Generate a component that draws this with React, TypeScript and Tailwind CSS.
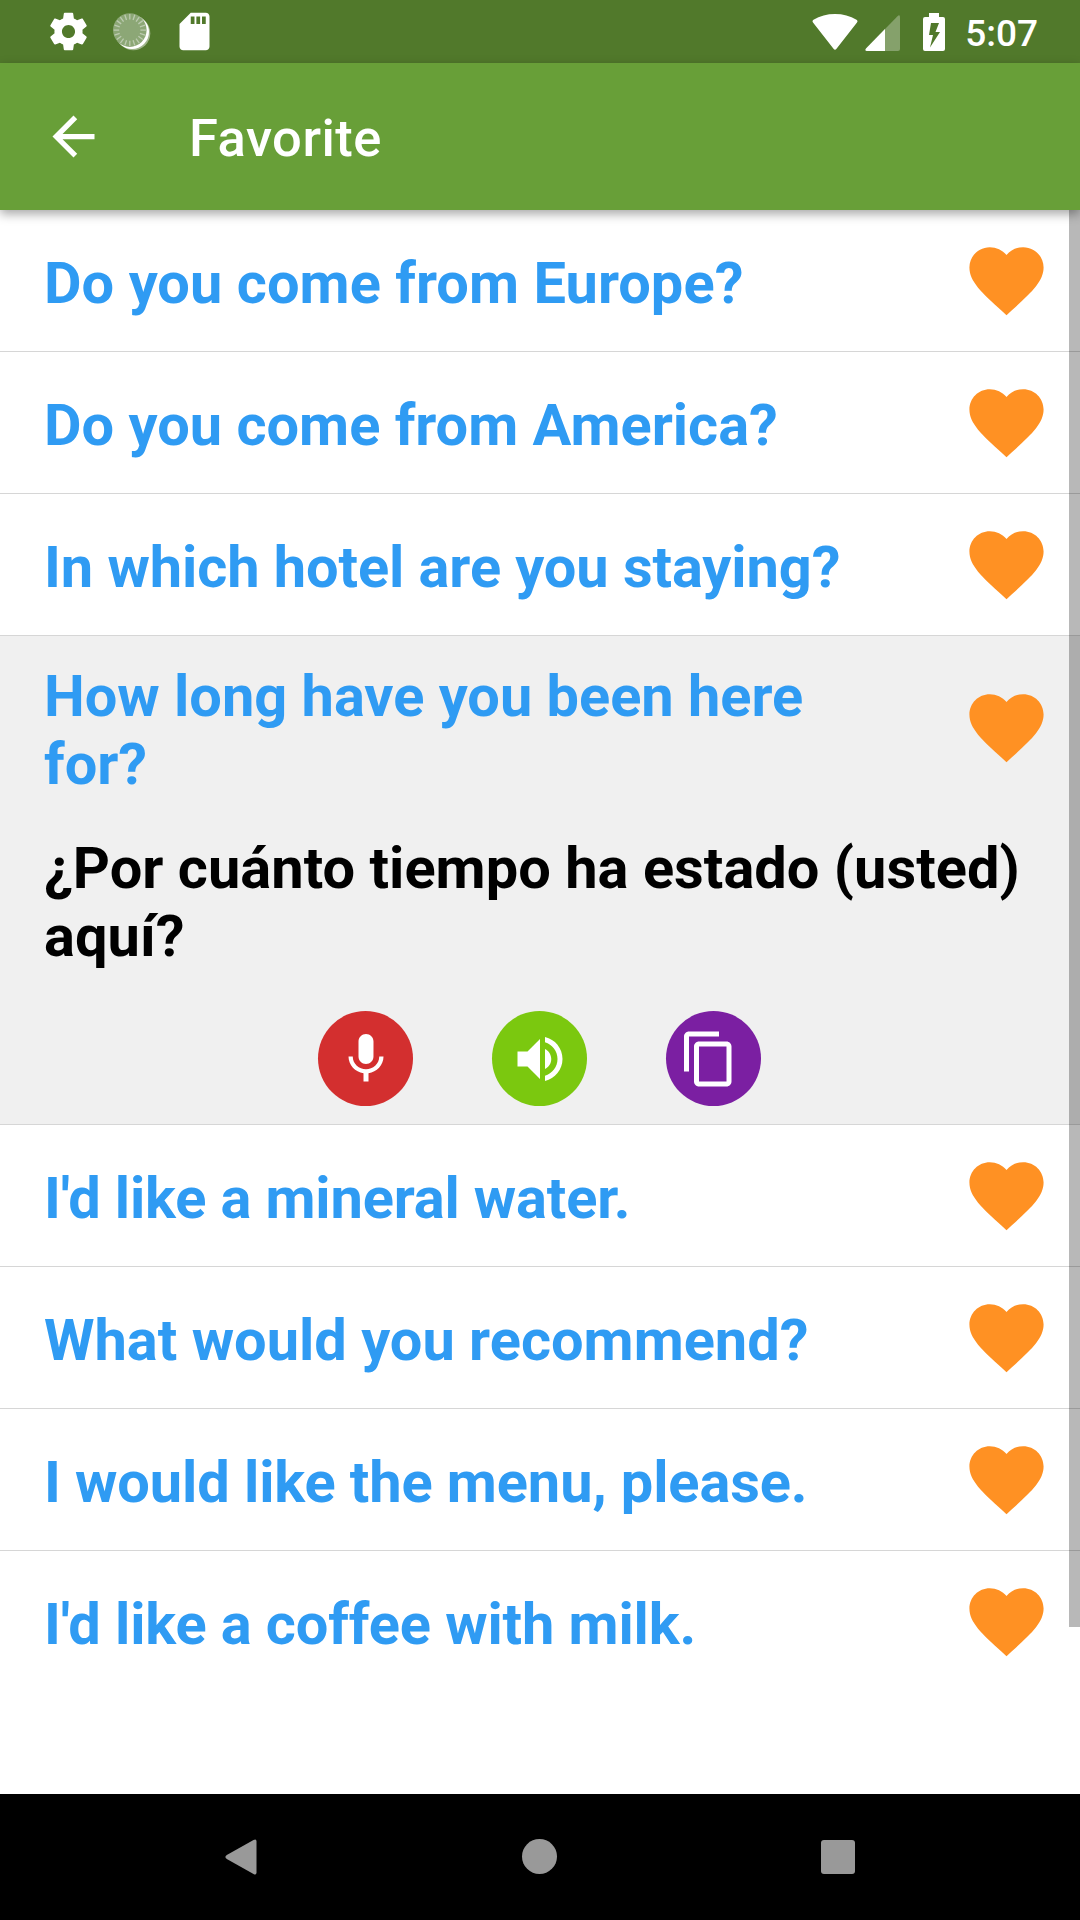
import type { ReactNode } from 'react';
import clsx from 'clsx';

interface Phrase {
  id: number;
  text: string;
  translation?: string;
  tracking?: string;
}

const PHRASES: Phrase[] = [
  { id: 1, text: 'Do you come from Europe?', tracking: 'tracking-[0.05px]' },
  { id: 2, text: 'Do you come from America?' },
  { id: 3, text: 'In which hotel are you staying?', tracking: 'tracking-[-0.08px]' },
  {
    id: 4,
    text: 'How long have you been here for?',
    translation: '¿Por cuánto tiempo ha estado (usted) aquí?',
    tracking: 'tracking-[-0.02px]',
  },
  { id: 5, text: "I'd like a mineral water.", tracking: 'tracking-[-0.15px]' },
  { id: 6, text: 'What would you recommend?' },
  { id: 7, text: 'I would like the menu, please.', tracking: 'tracking-[-0.1px]' },
  { id: 8, text: "I'd like a coffee with milk.", tracking: 'tracking-[-0.11px]' },
];

const TICKS = Array.from({ length: 20 }, (_, i) => i * 18);

function Icon({ d, className }: { d: string; className?: string }) {
  return (
    <svg viewBox="0 0 24 24" fill="currentColor" className={clsx('shrink-0', className)}>
      <path d={d} />
    </svg>
  );
}

const PATHS = {
  settings:
    'M19.43 12.98c.04-.32.07-.64.07-.98s-.03-.66-.07-.98l2.11-1.65c.19-.15.24-.42.12-.64l-2-3.46c-.12-.22-.39-.3-.61-.22l-2.49 1c-.52-.4-1.08-.73-1.69-.98l-.38-2.65C14.46 2.18 14.25 2 14 2h-4c-.25 0-.46.18-.49.42l-.38 2.65c-.61.25-1.17.59-1.69.98l-2.49-1c-.23-.09-.49 0-.61.22l-2 3.46c-.13.22-.07.49.12.64l2.11 1.65c-.04.32-.07.65-.07.98s.03.66.07.98l-2.11 1.65c-.19.15-.24.42-.12.64l2 3.46c.12.22.39.3.61.22l2.49-1c.52.4 1.08.73 1.69.98l.38 2.65c.03.24.24.42.49.42h4c.25 0 .46-.18.49-.42l.38-2.65c.61-.25 1.17-.59 1.69-.98l2.49 1c.23.09.49 0 .61-.22l2-3.46c.12-.22.07-.49-.12-.64l-2.11-1.65zM12 15.5c-1.93 0-3.5-1.57-3.5-3.5s1.57-3.5 3.5-3.5 3.5 1.57 3.5 3.5-1.57 3.5-3.5 3.5z',
  sdCard:
    'M18 2h-8L4.02 8 4 20c0 1.1.9 2 2 2h12c1.1 0 2-.9 2-2V4c0-1.1-.9-2-2-2zm-6 6h-2V4h2v4zm3 0h-2V4h2v4zm3 0h-2V4h2v4z',
  back: 'M20 11H7.83l5.59-5.59L12 4l-8 8 8 8 1.41-1.41L7.83 13H20v-2z',
  heart:
    'M12 21.35l-1.45-1.32C5.4 15.36 2 12.28 2 8.5 2 5.42 4.42 3 7.5 3c1.74 0 3.41.81 4.5 2.09C13.09 3.81 14.76 3 16.5 3 19.58 3 22 5.42 22 8.5c0 3.78-3.4 6.86-8.55 11.54L12 21.35z',
  mic: 'M12 14c1.66 0 2.99-1.34 2.99-3L15 5c0-1.66-1.34-3-3-3S9 3.34 9 5v6c0 1.66 1.34 3 3 3zm5.3-3c0 3-2.54 5.1-5.3 5.1S6.7 14 6.7 11H5c0 3.41 2.72 6.23 6 6.72V21h2v-3.28c3.28-.48 6-3.3 6-6.72h-1.7z',
  volume:
    'M3 9v6h4l5 5V4L7 9H3zm13.5 3c0-1.77-1.02-3.29-2.5-4.03v8.05c1.48-.73 2.5-2.25 2.5-4.02zM14 3.23v2.06c2.89.86 5 3.54 5 6.71s-2.11 5.85-5 6.71v2.06c4.01-.91 7-4.49 7-8.77s-2.99-7.86-7-8.77z',
  copy: 'M16 1H4c-1.1 0-2 .9-2 2v14h2V3h12V1zm3 4H8c-1.1 0-2 .9-2 2v14c0 1.1.9 2 2 2h11c1.1 0 2-.9 2-2V7c0-1.1-.9-2-2-2zm0 16H8V7h11v14z',
};

function SyncSpinner() {
  return (
    <svg viewBox="0 0 40 40" className="w-10 h-10 shrink-0">
      <circle cx="21.3" cy="21.3" r="17" fill="#fff" opacity="0.45" />
      <circle cx="20" cy="20" r="17" fill="#fff" />
      <circle cx="17.8" cy="18.1" r="16.8" fill="#8ca776" />
      {TICKS.map((angle) => (
        <path
          key={angle}
          d="M17.8 2v5.5"
          stroke="#bccbb0"
          strokeWidth="1.3"
          transform={`rotate(${angle} 17.8 18.1)`}
        />
      ))}
    </svg>
  );
}

function StatusBar() {
  return (
    <div className="flex h-[63px] shrink-0 items-center justify-between bg-[#51792b] pl-[46px] pr-[42px] text-white">
      <div className="flex items-center">
        <Icon d={PATHS.settings} className="w-[45px] h-[45px]" />
        <div className="ml-[21px]">
          <SyncSpinner />
        </div>
        <Icon d={PATHS.sdCard} className="ml-5 w-[45px] h-[45px]" />
      </div>
      <div className="flex items-center">
        <svg viewBox="0 0 46 38" className="w-[46px] h-[38px]" fill="currentColor">
          <path d="M1 9.5Q-.2 8 1.5 6.8Q11 1 23 1t21.5 5.8Q46.2 8 45 9.5L24.5 35.8Q23 37.5 21.5 35.8Z" />
        </svg>
        <svg viewBox="0 0 35 38" className="ml-[7px] w-[35px] h-[38px]" fill="currentColor">
          <path d="M35 4.5Q35 1 32.5 3.2L1 35.5Q-.5 38 2 38H33q2 0 2-2Z" opacity="0.3" />
          <path d="M20 16L1 35.5Q-.5 38 2 38H20Z" />
        </svg>
        <svg viewBox="0 0 22 38" className="ml-[23px] w-[22px] h-[38px]" fill="currentColor">
          <path
            fillRule="evenodd"
            d="M6 0h10v4h4q2 0 2 2v30q0 2-2 2H2q-2 0-2-2V6q0-2 2-2h4ZM8 10L6 22h4L7 34.5L17 19h-4.500L16 10Z"
          />
        </svg>
        <span className="ml-5 pt-[3px] text-[37px] leading-[43px] font-medium">5:07</span>
      </div>
    </div>
  );
}

function AppBar() {
  return (
    <div className="z-10 flex h-[147px] shrink-0 items-center bg-[#689f38] pl-[42px] text-white shadow-[0_4px_10px_rgba(0,0,0,0.35)]">
      <Icon d={PATHS.back} className="w-[63px] h-[63px]" />
      <h1 className="ml-[84px] pt-[3px] text-[52.5px] leading-[62px] font-medium tracking-[0.5px]">Favorite</h1>
    </div>
  );
}

function RoundButton({ className, children }: { className: string; children: ReactNode }) {
  return (
    <button className={clsx('flex h-[95px] w-[95px] items-center justify-center rounded-full text-white', className)}>
      {children}
    </button>
  );
}

function PhraseRow({ phrase, last }: { phrase: Phrase; last: boolean }) {
  const expanded = Boolean(phrase.translation);

  return (
    <li className={clsx(!last && 'border-b border-[#d6d6d6]', expanded && 'bg-[#f0f0f0]')}>
      <div className={clsx('flex items-center justify-between pl-[44px] pr-[29px]', expanded ? 'h-[182px]' : 'h-[141px]')}>
        <p className={clsx('w-[800px] pt-[5px] text-[#2f9bf3]', phrase.tracking)}>{phrase.text}</p>
        <Icon d={PATHS.heart} className="w-[89px] h-[89px] text-[#ff9123]" />
      </div>
      {expanded && (
        <>
          <p className="pl-[44px] pr-[40px] pt-[16px] text-black tracking-[0.03px]">{phrase.translation}</p>
          <div className="flex justify-center gap-[79px] pt-[41px] pr-[2px] pb-[18px]">
            <RoundButton className="bg-[#d32f2f] pl-px">
              <Icon d={PATHS.mic} className="w-[60px] h-[60px]" />
            </RoundButton>
            <RoundButton className="bg-[#7bc80f] pl-px">
              <Icon d={PATHS.volume} className="w-[60px] h-[60px]" />
            </RoundButton>
            <RoundButton className="bg-[#7b1fa2] pr-[9px]">
              <Icon d={PATHS.copy} className="w-[60px] h-[60px]" />
            </RoundButton>
          </div>
        </>
      )}
    </li>
  );
}

function NavBar() {
  return (
    <div className="flex h-[126px] shrink-0 items-center justify-between bg-black pl-[224px] pr-[225px] pb-px text-[#999]">
      <svg viewBox="0 0 34 38" className="w-[34px] h-[38px]" fill="currentColor">
        <path d="M29.5 2Q32.5 .5 32.5 3.5V34.5Q32.5 37.5 29.5 36L2.8 21Q0 19 2.8 17Z" />
      </svg>
      <div className="h-[35px] w-[35px] rounded-full bg-[#999]" />
      <div className="h-[34px] w-[34px] rounded-[3px] bg-[#999]" />
    </div>
  );
}

export default function App() {
  return (
    <div className="flex h-[1920px] w-[1080px] flex-col overflow-hidden bg-white font-[Roboto,sans-serif]">
      <StatusBar />
      <AppBar />
      <div className="relative flex-1">
        <ul className="text-[57.75px] leading-[68px] font-bold">
          {PHRASES.map((phrase, i) => (
            <PhraseRow key={phrase.id} phrase={phrase} last={i === PHRASES.length - 1} />
          ))}
        </ul>
        <div className="absolute top-0 right-0 h-[1417px] w-[11px] bg-black/28" />
      </div>
      <NavBar />
    </div>
  );
}
